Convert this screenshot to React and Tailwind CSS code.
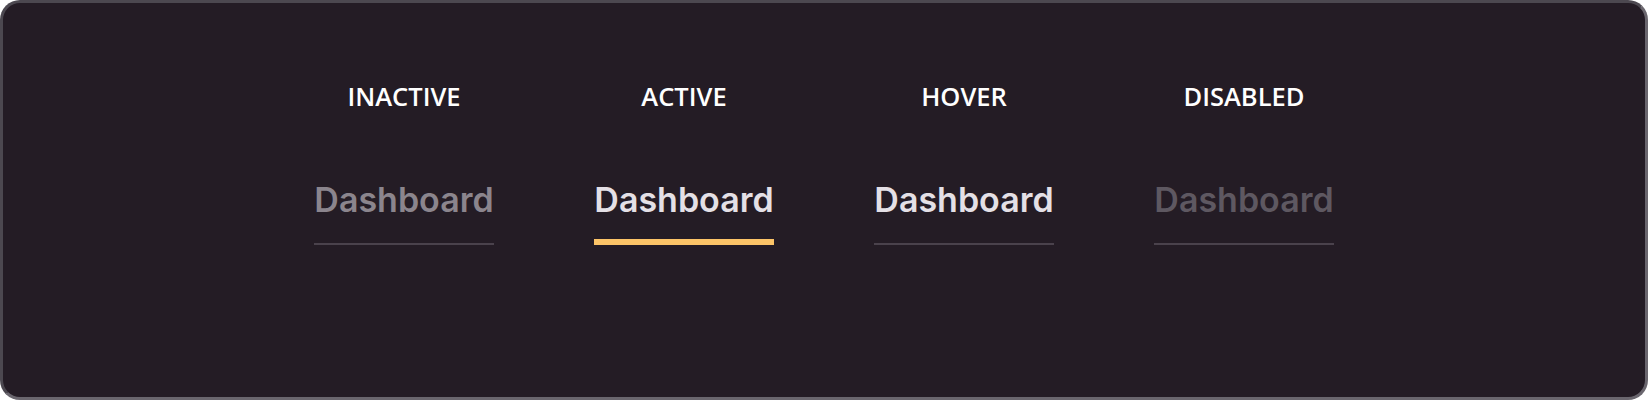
import React from "react";

const tabs = [
  { label: "INACTIVE", text: "text-[#8b858d]", bar: "h-[2px] bg-[#4a424c]" },
  { label: "ACTIVE", text: "text-[#e4e0e6]", bar: "h-[6px] bg-[#fcc468]" },
  { label: "HOVER", text: "text-[#e4e0e6]", bar: "h-[2px] bg-[#4a424c]" },
  { label: "DISABLED", text: "text-[#5e5861]", bar: "h-[2px] bg-[#4a424c]" },
];

export default function App() {
  return (
    <div className="w-[1648px] h-[400px] bg-white">
      <div className="w-full h-full rounded-[20px] border-[3px] border-t-[#4c4850] border-l-[#4c4850] border-r-[#6a666e] border-b-[#6a666e] bg-[#241c25] flex justify-center gap-[100px] pt-[77px]">
        {tabs.map((t) => (
          <div key={t.label} className="w-[180px] flex flex-col items-center">
            <div className="text-white text-[25.5px] leading-[32px] font-semibold font-['Open_Sans',sans-serif]">
              {t.label}
            </div>
            <div className="mt-[68px] w-full flex flex-col">
              <div className={`text-center text-[34px] leading-[40px] font-semibold font-['Inter',sans-serif] ${t.text}`}>
                Dashboard
              </div>
              <div className="mt-[19px] h-[6px] flex items-end">
                <div className={`w-full ${t.bar}`} />
              </div>
            </div>
          </div>
        ))}
      </div>
    </div>
  );
}
